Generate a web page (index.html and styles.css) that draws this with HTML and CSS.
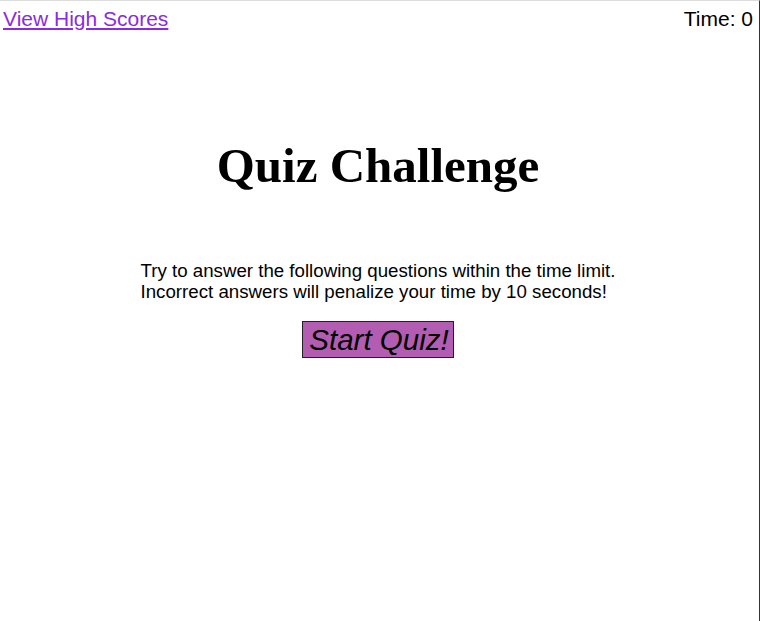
FILE: index.html
```html
<!DOCTYPE html>
<html>
<head>
<meta charset="utf-8">
<link rel="stylesheet" href="styles.css">
</head>
<body>
<div class="page">
  <header class="topbar">
    <a class="scores-link" href="#">View High Scores</a>
    <span class="timer">Time: 0</span>
  </header>
  <main class="intro">
    <h1 class="title">Quiz Challenge</h1>
    <p class="desc">Try to answer the following questions within the time limit.<br>Incorrect answers will penalize your time by 10 seconds!</p>
    <button class="start-btn">Start Quiz!</button>
  </main>
</div>
</body>
</html>
```
FILE: styles.css
```css
html, body {
  margin: 0;
  padding: 0;
  background: #fff;
}
.page {
  box-sizing: border-box;
  min-height: 100vh;
  border-top: 1px solid #dcdcdc;
  border-right: 1px solid #333;
  font-family: "Liberation Sans", Arial, sans-serif;
  color: #000;
}
.topbar {
  display: flex;
  justify-content: space-between;
  align-items: flex-start;
  padding: 6px 6px 0 3px;
  font-size: 21px;
  line-height: 24px;
}
.scores-link {
  color: #8a2be2;
  text-decoration: underline;
}
.timer {
  color: #000;
}
.intro {
  display: flex;
  flex-direction: column;
  align-items: center;
  padding-right: 3px;
}
.title {
  font-family: "Liberation Serif", "Times New Roman", serif;
  font-size: 49px;
  font-weight: bold;
  line-height: 56px;
  margin: 107px 0 0 0;
}
.desc {
  font-size: 18.7px;
  line-height: 21px;
  margin: 66px 0 0 0;
  text-align: left;
}
.start-btn {
  margin-top: 19px;
  font-family: "Liberation Sans", Arial, sans-serif;
  font-style: italic;
  font-size: 29.5px;
  line-height: 35px;
  padding: 0 4px 0 6px;
  background: #b25db2;
  border: 1px solid #222;
  color: #000;
  border-radius: 0;
}
```
